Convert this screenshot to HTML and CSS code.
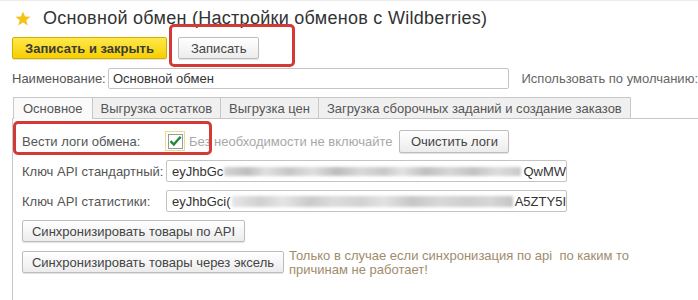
FILE: index.html
```html
<!DOCTYPE html>
<html lang="ru">
<head>
  <meta charset="UTF-8" />
  <title>Основной обмен</title>
  <link rel="stylesheet" href="styles.css">
</head>
<body>

<div class="page">
  <div class="header">
    <svg class="star" width="16" height="15" viewBox="0 0 16 15">
      <polygon points="8,0.5 10.1,5.4 15.5,5.7 11.3,9.2 12.7,14.5 8,11.5 3.3,14.5 4.7,9.2 0.5,5.7 5.9,5.4" fill="#f5c21b"/>
    </svg>
    <h1>Основной обмен (Настройки обменов с Wildberries)</h1>
  </div>

  <div class="toolbar">
    <button class="btn btn-main">Записать и закрыть</button>
    <button class="btn btn-save">Записать</button>
    <div class="mark mark-save"></div>
  </div>

  <div class="name-row">
    <span class="label name-label">Наименование:</span>
    <div class="field name-field">Основной обмен</div>
    <span class="label default-label">Использовать по умолчанию:</span>
  </div>

  <div class="tabs">
    <div class="tab active">Основное</div>
    <div class="tab">Выгрузка остатков</div>
    <div class="tab">Выгрузка цен</div>
    <div class="tab">Загрузка сборочных заданий и создание заказов</div>
  </div>

  <div class="panel">
    <div class="row logs-row">
      <span class="label row-label">Вести логи обмена:</span>
      <span class="check-wrap">
        <span class="check">
          <svg width="13" height="12" viewBox="0 0 13 12">
            <path d="M1.5 6.2 L4.8 9.6 L11.6 1.8" fill="none" stroke="#1f8a3a" stroke-width="2.4"/>
          </svg>
        </span>
      </span>
      <span class="hint-gray">Без необходимости не включайте</span>
      <button class="btn btn-clear">Очистить логи</button>
      <div class="mark mark-logs"></div>
    </div>

    <div class="row key-row">
      <span class="label row-label">Ключ API стандартный:</span>
      <div class="field key-field">
        <span class="key-start">eyJhbGc</span>
        <span class="key-blur"></span>
        <span class="key-end">QwMW</span>
      </div>
    </div>

    <div class="row key-row key-row-2">
      <span class="label row-label">Ключ API статистики:</span>
      <div class="field key-field">
        <span class="key-start">eyJhbGci(</span>
        <span class="key-blur key-blur-2"></span>
        <span class="key-end">A5ZTY5I</span>
      </div>
    </div>

    <div class="row sync-row">
      <button class="btn btn-sync">Синхронизировать товары по API</button>
    </div>

    <div class="row sync-row sync-row-2">
      <button class="btn btn-sync btn-sync-2">Синхронизировать товары через эксель</button>
      <span class="hint-brown">Только в случае если синхронизация по api&nbsp; по каким то<br>причинам не работает!</span>
    </div>
  </div>
</div>

</body>
</html>
```

FILE: styles.css
```css
body {
  margin: 0;
  background: #fff;
  font-family: "Liberation Sans", Arial, sans-serif;
  font-size: 13px;
  color: #4a4a4a;
}

.page {
  position: relative;
  padding-left: 12px;
  height: 300px;
  overflow: hidden;
  border-top: 1px solid #ececec;
}

/* header */
.header {
  display: flex;
  align-items: center;
  height: 35px;
}

.star {
  margin-left: 3px;
  margin-top: -1px;
}

h1 {
  margin: 0 0 0 12px;
  font-size: 18px;
  font-weight: normal;
  color: #333;
  letter-spacing: 0.28px;
}

/* buttons */
.btn {
  font-family: "Liberation Sans", Arial, sans-serif;
  font-size: 13px;
  color: #444;
  height: 22px;
  padding: 0 12px;
  border: 1px solid #bdbdbd;
  border-radius: 2px;
  background: linear-gradient(#ffffff, #ececec);
  box-shadow: 0 1px 1px rgba(0,0,0,0.12);
}

.toolbar {
  position: relative;
  display: flex;
  gap: 11px;
  height: 22px;
  margin-top: 1px;
}

.btn-main {
  width: 155px;
  font-weight: bold;
  color: #3a3a3a;
  border-color: #d3ae00;
  background: linear-gradient(#ffe94a, #f6cf00);
}

.btn-save {
  width: 81px;
}

/* red annotation boxes */
.mark {
  position: absolute;
  border: 3px solid #d33a36;
  border-radius: 5px;
}

.mark-save {
  left: 157px;
  top: -13px;
  width: 120px;
  height: 37px;
}

.mark-logs {
  left: -9px;
  top: -7px;
  width: 193px;
  height: 28px;
}

/* name row */
.name-row {
  display: flex;
  align-items: center;
  height: 21px;
  margin-top: 9px;
}

.label {
  color: #555;
}

.name-label {
  width: 96px;
}

.field {
  box-sizing: border-box;
  height: 21px;
  border: 1px solid #c4c4c4;
  border-radius: 2px;
  background: #fff;
  color: #333;
  padding: 0 4px;
  display: flex;
  align-items: center;
  white-space: nowrap;
  overflow: hidden;
}

.name-field {
  width: 401px;
}

.default-label {
  margin-left: 13px;
  color: #666;
  white-space: nowrap;
}

/* tabs */
.tabs {
  display: flex;
  margin-top: 8px;
  border-bottom: 1px solid #c8c8c8;
  margin-right: -20px;
  height: 21px;
}

.tab {
  box-sizing: border-box;
  height: 21px;
  padding: 0 8px;
  display: flex;
  align-items: center;
  border: 1px solid #c8c8c8;
  border-bottom: none;
  margin-right: -1px;
  background: #f0f0f0;
  color: #555;
  white-space: nowrap;
}

.tab.active {
  background: #fafafa;
  height: 22px;
  margin-left: 1px;
  padding: 0 9px;
}

/* panel */
.panel {
  border-left: 1px solid #c8c8c8;
  padding: 9px 0 0 9px;
  height: 200px;
}

.row {
  position: relative;
  display: flex;
  align-items: center;
}

.row-label {
  width: 144px;
  white-space: nowrap;
}

.logs-row {
  height: 26px;
}

.check-wrap {
  box-sizing: border-box;
  width: 20px;
  height: 20px;
  margin-left: -1px;
  border: 1px solid #eadb8c;
  display: flex;
  align-items: center;
  justify-content: center;
}

.check {
  box-sizing: border-box;
  width: 15px;
  height: 15px;
  border: 1px solid #9a9a9a;
  background: #fff;
  display: flex;
  align-items: center;
  justify-content: center;
}

.hint-gray {
  margin-left: 4px;
  color: #a8a8a8;
  white-space: nowrap;
}

.btn-clear {
  margin-left: 7px;
  width: 110px;
  height: 23px;
  padding: 0;
}

.key-row {
  margin-top: 6px;
}

.key-row-2 {
  margin-top: 8px;
}

.key-field {
  width: 401px;
  height: 22px;
  padding: 0 0 0 5px;
}

.key-start {
  color: #333;
}

/* blurred-out part of the key */
.key-blur {
  flex: 1;
  height: 9px;
  margin: 0 1px;
  filter: blur(1.5px);
  background: linear-gradient(90deg,
    #d4d4d4 0, #bdbdbd 8%, #e0e0e0 14%, #c6c6c6 22%, #dedede 30%,
    #bcbcbc 38%, #d8d8d8 46%, #c8c8c8 54%, #e2e2e2 60%, #bfbfbf 68%,
    #d6d6d6 76%, #c2c2c2 84%, #dcdcdc 92%, #c9c9c9 100%);
}

.key-blur-2 {
  height: 11px;
  background: linear-gradient(90deg,
    #e6e6e6 0, #d0d0d0 10%, #e4e4e4 18%, #cacaca 28%, #dcdcdc 36%,
    #d2d2d2 46%, #e2e2e2 54%, #c6c6c6 64%, #d8d8d8 74%, #cecece 84%,
    #d6d6d6 92%, #c4c4c4 100%);
}

.key-end {
  padding-left: 1px;
  color: #333;
}

.sync-row {
  margin-top: 8px;
}

.sync-row-2 {
  margin-top: 9px;
  align-items: flex-start;
}

.btn-sync {
  width: 223px;
  padding: 0;
}

.btn-sync-2 {
  width: 262px;
}

.hint-brown {
  margin-left: 5px;
  margin-top: -2px;
  color: #a08c6c;
  line-height: 14px;
  white-space: nowrap;
}
```
